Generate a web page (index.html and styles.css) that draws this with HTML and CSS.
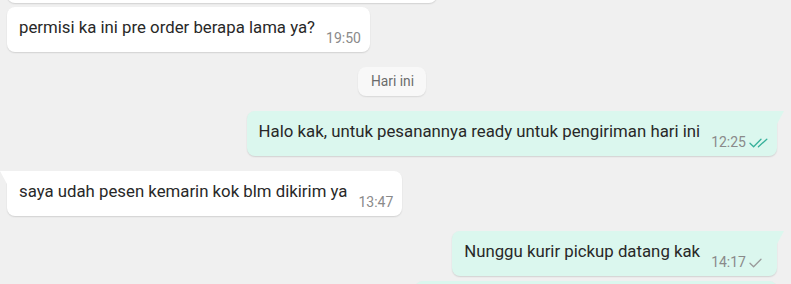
FILE: index.html
```html
<!DOCTYPE html>
<html lang="id">
<head>
<meta charset="UTF-8" />
<meta name="viewport" content="width=device-width, initial-scale=1" />
<title>Chat</title>
<link rel="stylesheet" href="styles.css">
</head>
<body>

<div class="chat">
  <!-- previous bubble, scrolled mostly out of view -->
  <div class="msg in stub top-stub"></div>

  <div class="msg in">
    <span class="text">permisi ka ini pre order berapa lama ya?</span>
    <span class="meta"><span class="time">19:50</span></span>
  </div>

  <div class="day"><span>Hari ini</span></div>

  <div class="msg out first">
    <span class="text">Halo kak, untuk pesanannya ready untuk pengiriman hari ini</span>
    <span class="meta">
      <span class="time">12:25</span>
      <svg class="tick read" width="19" height="10" viewBox="0 0 19 10" fill="none">
        <path d="M1 5.2l3.6 3.6L12 1.2" stroke="currentColor" stroke-width="1.3" stroke-linecap="round" stroke-linejoin="round"/>
        <path d="M9.4 8.8L17.8 1.2" stroke="currentColor" stroke-width="1.3" stroke-linecap="round"/>
      </svg>
    </span>
  </div>

  <div class="msg in first">
    <span class="text">saya udah pesen kemarin kok blm dikirim ya</span>
    <span class="meta"><span class="time">13:47</span></span>
  </div>

  <div class="msg out first">
    <span class="text">Nunggu kurir pickup datang kak</span>
    <span class="meta">
      <span class="time">14:17</span>
      <svg class="tick" width="19" height="10" viewBox="0 0 19 10" fill="none">
        <path d="M1 5.2l3.6 3.6L12 1.2" stroke="currentColor" stroke-width="1.3" stroke-linecap="round" stroke-linejoin="round"/>
      </svg>
    </span>
  </div>

  <!-- next bubble, only its top edge is in view -->
  <div class="msg out stub bottom-stub"></div>
</div>

</body>
</html>
```

FILE: styles.css
```css
* {
  box-sizing: border-box;
}
html, body {
  height: 100%;
}
body {
  margin: 0;
  background: #f0f0f0;
  font-family: Roboto, 'Noto Sans', sans-serif;
  color: #282828;
  overflow: hidden;
}
.chat {
  height: 100vh;
  overflow: hidden;
  display: flex;
  flex-direction: column;
  gap: 4px;
  padding: 0 14px 0 7px;
}
.chat > * {
  flex-shrink: 0;
}
.msg {
  position: relative;
  max-width: 85%;
  display: flex;
  padding: 10px 9px 6px 12px;
  border-radius: 8px;
  background: #fff;
  box-shadow: 0 1px 1.5px rgba(0, 0, 0, 0.13);
  font-size: 16.8px;
  line-height: 21px;
}
.msg .text {
  margin-bottom: 8px;
}
.msg.in {
  align-self: flex-start;
}
.msg.out {
  align-self: flex-end;
  background: #dbf7ee;
}
.msg.first {
  margin-top: 11px;
}
.msg.stub {
  height: 45px;
}
.top-stub {
  width: 430px;
  margin-top: -42px;
}
.bottom-stub {
  width: 362px;
  margin-top: 1px;
}
.msg.in.first {
  border-top-left-radius: 0;
}
.msg.out.first {
  border-top-right-radius: 0;
}
/* tail on the first bubble of a group */
.msg.first::before {
  content: '';
  position: absolute;
  top: 0;
  width: 0;
  height: 0;
  border-top: 13px solid #fff;
}
.msg.in.first::before {
  left: -7px;
  border-left: 7px solid transparent;
}
.msg.out.first::before {
  right: -7px;
  border-top-color: #dbf7ee;
  border-right: 7px solid transparent;
}
.meta {
  align-self: flex-end;
  display: flex;
  align-items: center;
  gap: 3px;
  margin-left: 11px;
  white-space: nowrap;
  color: #8a8a8a;
  font-size: 14px;
  line-height: 16px;
}
.tick {
  color: #9a9a9a;
  margin-top: 1px;
}
.tick.read {
  color: #36b09a;
}
.day {
  align-self: center;
  margin-top: 11px;
}
.day span {
  display: block;
  padding: 6px 12px 6px 13px;
  border-radius: 8px;
  background: #f8f8f8;
  box-shadow: 0 1px 1.5px rgba(0, 0, 0, 0.1);
  color: #6b6b6b;
  font-size: 13.8px;
  line-height: 17px;
}
```
